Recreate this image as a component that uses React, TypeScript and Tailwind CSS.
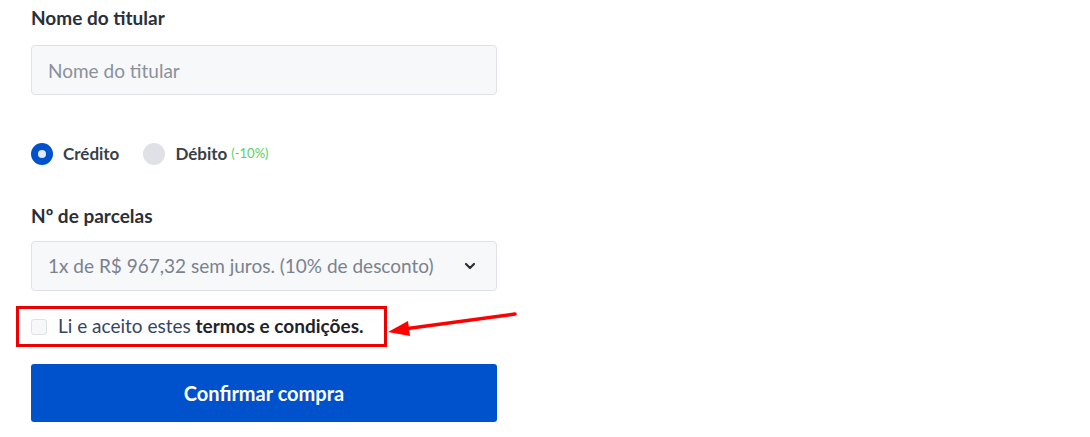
import React from 'react'

const font = { fontFamily: 'Lato, "Open Sans", sans-serif' }

const App = () => {
  return (
    <div className="relative min-h-[437px] w-[1090px] bg-white" style={font}>
      <div className="w-[466px] ml-[31px] pt-[6px]">
        {/* NOME */}
        <label className="block text-[19px] leading-6 font-bold text-[#2b2f36]">Nome do titular</label>
        <input
          type="text"
          placeholder="Nome do titular"
          className="mt-[15px] block w-full h-[50px] px-4 rounded-[4px] border border-[#dfe1e6] bg-[#f7f8fa] text-[19px] text-[#42526e] placeholder:text-[#8a919c] outline-none"
        />

        {/* PAGAMENTO */}
        <div className="mt-[48px] flex items-center h-[22px]">
          <div className="flex items-center">
            <span className="w-[22px] h-[22px] rounded-full bg-[#0052cc] flex items-center justify-center">
              <span className="w-[8px] h-[8px] rounded-full bg-[#deebff]"></span>
            </span>
            <span className="ml-[10px] text-[17px] font-bold text-[#3b3f46]">Crédito</span>
          </div>
          <div className="flex items-center ml-[24px]">
            <span className="w-[22px] h-[22px] rounded-full bg-[#dfe1e6]"></span>
            <span className="ml-[10px] text-[17px] font-bold text-[#3b3f46]">Débito</span>
            <span className="ml-[4px] text-[13px] text-[#57d163]">(-10%)</span>
          </div>
        </div>

        {/* PARCELAS */}
        <label className="block mt-[39px] text-[19px] leading-6 font-bold text-[#2b2f36]">Nº de parcelas</label>
        <div className="mt-[13px] flex items-center justify-between w-full h-[50px] pl-4 pr-[20px] rounded-[4px] border border-[#dfe1e6] bg-[#f7f8fa]">
          <span className="text-[19px] text-[#7a828e]">1x de R$ 967,32 sem juros. (10% de desconto)</span>
          <svg width="12" height="8" viewBox="0 0 12 8" fill="none">
            <path d="M2 2l4 4 4-4" stroke="#2b2f36" strokeWidth="2.2" strokeLinecap="round" strokeLinejoin="round" />
          </svg>
        </div>

        {/* TERMOS */}
        <div className="mt-[15px] -ml-[15px] inline-flex items-center h-[41px] pl-[12px] pr-[20px] border-[3px] border-[#ee0000]">
          <span className="w-[16px] h-[16px] rounded-[3px] border border-[#dfe1e6] bg-[#f7f8fa]"></span>
          <span className="ml-[11px] text-[19px] text-[#344563]">
            Li e aceito estes <span className="font-bold text-[#1f2329]">termos e condições.</span>
          </span>
        </div>

        <button className="mt-[17px] block w-full h-[58px] rounded-[3px] bg-[#0052cc] text-white text-[20px] font-bold">
          Confirmar compra
        </button>
      </div>

      {/* seta */}
      <svg className="absolute left-[384px] top-[308px]" width="136" height="30" viewBox="0 0 136 30" fill="none">
        <line x1="131" y1="6" x2="20" y2="21" stroke="#ff0000" strokeWidth="3.5" strokeLinecap="round" />
        <polygon points="4,24 24,13 26,28" fill="#ff0000" />
      </svg>
    </div>
  )
}

export default App
